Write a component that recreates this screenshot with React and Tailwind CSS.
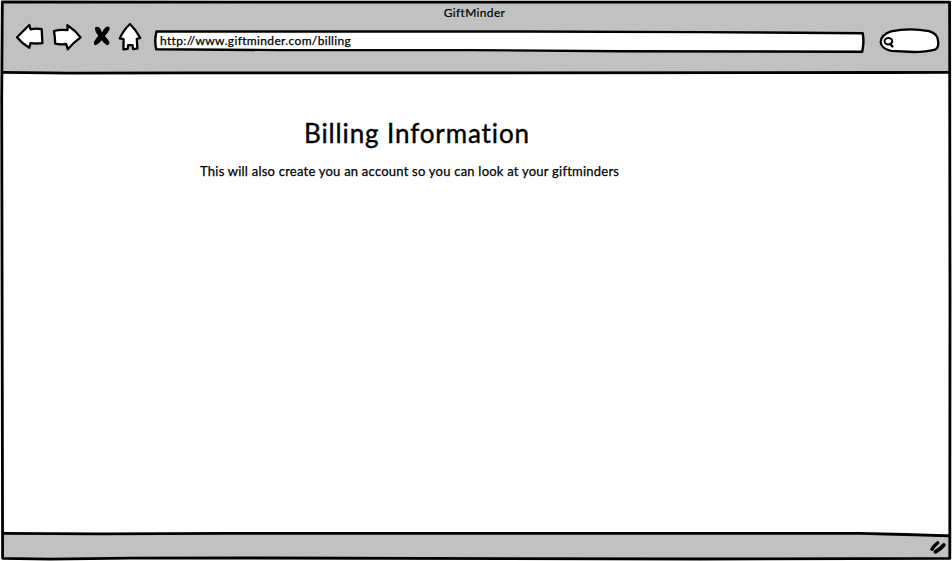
import React from "react";

const ink = {
  fill: "#fff",
  stroke: "#000",
  strokeWidth: 2.3,
  strokeLinejoin: "round",
  strokeLinecap: "round",
};

function BackIcon() {
  return (
    <svg className="h-8 w-[30px] shrink-0" viewBox="15 22 30 32" {...ink}>
      <path d="M17 37.2 L29.3 25 L30.6 29.3 Q36 28.2 41.7 29.2 L42.4 43.2 Q36 43.8 30.5 43.1 L29.3 47.8 Q22 43.5 17 37.2 Z" />
    </svg>
  );
}

function ForwardIcon() {
  return (
    <svg className="h-8 w-[30px] shrink-0" viewBox="52 22 30 32" {...ink}>
      <path d="M54 31 Q60 29.4 67.6 30.2 L67.4 25.2 Q75 30 80.6 37.4 Q73.5 42.5 67.8 49.3 L66.2 44 Q60 44.8 55.2 43.7 Q55 37 54 31 Z" />
    </svg>
  );
}

function StopIcon() {
  return (
    <svg className="h-8 w-[18px] shrink-0" viewBox="93 22 18 32">
      <path d="M94.8 28 Q97.6 25.2 100.2 28.6 L102 32.4 Q104.7 27 107.6 26.6 Q110.6 26.6 109.3 30 Q107.5 33.4 104.9 36 Q107.4 38.5 109.2 41.8 Q110 45 107.2 45.2 Q104.2 43.9 101.6 40.2 Q99 44 95.8 45.3 Q92.9 45 94.2 41.4 Q96 38.4 98.3 35.8 Q94.8 31.7 94.8 28 Z" />
    </svg>
  );
}

function HomeIcon() {
  return (
    <svg className="h-8 w-6 shrink-0" viewBox="118 22 24 32" {...ink}>
      <path d="M130 24 Q136 30 140.3 38 L136.8 38.8 L137.4 48.6 L133 49 L132.6 45.2 L128.2 45.2 L127.6 48.8 L123.4 49.4 L123.6 39.2 L119.8 38.4 Q123.5 30 130 24 Z" />
    </svg>
  );
}

function AddressBar() {
  return (
    <div className="relative flex h-8 w-[713px] shrink-0 items-center">
      <svg className="absolute inset-0 h-8 w-[713px]" viewBox="153 22 713 32" {...ink}>
        <path
          strokeWidth="2.4"
          d="M156.5 31.5 H520 L700 32.1 L862.7 33.3 Q864.4 42 862.2 51.7 L620 51.3 L470 50.1 L280 50.1 L156.2 49.2 Q154.2 40 156.5 31.5 Z"
        />
      </svg>
      <span className="relative mt-[5px] pl-[7px] text-[12px] leading-4 tracking-[0.35px] [-webkit-text-stroke:0.25px_black]">
        http://www.giftminder.com/billing
      </span>
    </div>
  );
}

function SearchField() {
  return (
    <svg className="h-8 w-[62px] shrink-0" viewBox="879 22 62 32" {...ink}>
      <path d="M891 31.3 Q910 27.6 929 31.2 Q938 33.7 938.2 41.5 Q938.8 48.3 935 49.6 Q926 52 914 52 L891 50.8 Q881 48.6 880.7 42 Q881 34.5 891 31.3 Z" />
      <ellipse cx="888.4" cy="41.2" rx="3.8" ry="3.2" strokeWidth="2" />
      <path d="M890 43.8 L892.5 46.5" />
    </svg>
  );
}

function Frame() {
  return (
    <svg
      className="pointer-events-none absolute inset-0 h-[561px] w-[952px]"
      viewBox="0 0 952 561"
      fill="none"
      stroke="#000"
      strokeWidth="2.8"
      strokeLinejoin="round"
    >
      <path d="M2.3 1.9 L300 2.2 L949.6 2.1 L950 300 L949.8 558.4 L700 559 L245 558 L130 558.1 L50 559.2 L2.6 558.3 L2.3 400 L1.7 100 Z" />
      <path d="M2 72.3 L70 73.2 L190 72.8 L500 72.9 L880 72.5 L950 72.3" />
      <path d="M2 533.3 L100 533.8 L230 533.4 L860 533.4 L905 534.5 L950 535.8" />
    </svg>
  );
}

export default function App() {
  return (
    <div className="relative flex h-[561px] w-[952px] flex-col overflow-hidden bg-white p-0.5 font-[Lato,sans-serif] text-black">
      <header className="flex h-[71px] shrink-0 flex-col bg-[#c1c1c1]">
        <h1 className="h-5 pt-[3px] pr-[3px] text-center text-[12px] leading-4 tracking-[0.35px] [-webkit-text-stroke:0.2px_black]">
          GiftMinder
        </h1>
        <nav className="flex pl-[13px]">
          <BackIcon />
          <span className="w-[7px] shrink-0" />
          <ForwardIcon />
          <span className="w-[11px] shrink-0" />
          <StopIcon />
          <span className="w-[7px] shrink-0" />
          <HomeIcon />
          <span className="w-[11px] shrink-0" />
          <AddressBar />
          <span className="w-[13px] shrink-0" />
          <SearchField />
        </nav>
      </header>
      <main className="flex flex-1 flex-col bg-white pt-[44px]">
        <h2 className="pl-[302px] text-[26px] leading-8 tracking-[0.88px] whitespace-nowrap [-webkit-text-stroke:0.4px_black]">
          Billing Information
        </h2>
        <p className="mt-[14px] pl-[198px] text-[13px] leading-4 tracking-[0.23px] whitespace-nowrap [-webkit-text-stroke:0.25px_black]">
          This will also create you an account so you can look at your giftminders
        </p>
      </main>
      <footer className="flex h-[25px] shrink-0 items-center justify-end bg-[#c1c1c1] pr-[3px]">
        <svg className="h-4 w-[18px]" viewBox="929 540 18 16" fill="none" stroke="#000" strokeWidth="3.4" strokeLinecap="round">
          <path d="M932 550.3 Q934 546.5 937.7 543.8" />
          <path d="M935.5 552.8 Q940 550.5 943.8 546" strokeWidth="3.8" />
        </svg>
      </footer>
      <Frame />
    </div>
  );
}
